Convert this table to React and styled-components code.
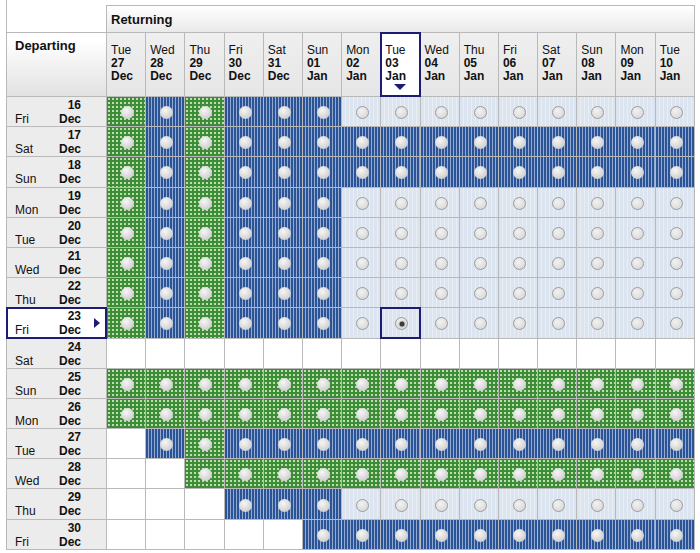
import React from "react";
import styled, { createGlobalStyle, css } from "styled-components";

const LINE = "#b9b9b9";
const NAVY = "#1c1c74";

const GlobalStyle = createGlobalStyle`
  body {
    margin: 0;
    background: #fff;
    font-family: "Liberation Sans", Arial, sans-serif;
    color: #111;
  }
`;

// left border runs to the top of the page, the grid sits 5px lower
const Frame = styled.div`
  margin-left: 6px;
  padding-top: 5px;
  border-left: 1px solid ${LINE};
  width: fit-content;
  background: #fff;
`;

// grid lines are the gaps showing the grid background
const Grid = styled.div`
  display: grid;
  grid-template-columns: 99px repeat(15, 38.2px);
  grid-template-rows: 27px 63px repeat(15, 29.2px);
  gap: 1px;
  background: ${LINE};
  border-right: 1px solid ${LINE};
  border-bottom: 1px solid ${LINE};
`;

const Corner = styled.div`
  background: #fff;
`;

const Returning = styled.div`
  grid-column: span 15;
  border-top: 1px solid ${LINE};
  background: linear-gradient(#ffffff, #e9e9e9);
  display: flex;
  align-items: center;
  padding-left: 4px;
  font-size: 13px;
  font-weight: bold;
`;

const Departing = styled.div`
  background: linear-gradient(#ffffff 10%, #e2e2e2);
  padding: 5px 8px;
  font-size: 13px;
  line-height: 15px;
  font-weight: bold;
`;

const selectedBox = css`
  position: relative;
  background: #fff;
  &::after {
    content: "";
    position: absolute;
    inset: -1px;
    border: 2px solid ${NAVY};
    z-index: 2;
    pointer-events: none;
  }
`;

const DateHead = styled.div`
  background: linear-gradient(#efefef, #e6e6e6);
  display: flex;
  flex-direction: column;
  justify-content: center;
  padding: 0 0 3px 4px;
  font-size: 12px;
  ${(p) => p.$active && selectedBox}
`;

const DayName = styled.span`
  line-height: 13px;
`;

const DayNum = styled.span`
  line-height: 12px;
  font-weight: bold;
`;

const Month = styled.span`
  line-height: 14px;
  font-weight: bold;
`;

const DownArrow = styled.span`
  position: absolute;
  left: 50%;
  bottom: 6px;
  transform: translateX(-50%);
  border-left: 6px solid transparent;
  border-right: 6px solid transparent;
  border-top: 6px solid ${NAVY};
`;

const RowHead = styled.div`
  background: #ececec;
  padding: 1px 25px 0 8px;
  display: grid;
  grid-template-columns: 1fr auto;
  grid-template-rows: 14px 14px;
  font-size: 12px;
  line-height: 14px;
  ${(p) => p.$active && selectedBox}
`;

const RowNum = styled.span`
  grid-column: 2;
  text-align: right;
  font-weight: bold;
`;

const RowDay = styled.span`
  grid-column: 1;
`;

const RowMonth = styled.span`
  text-align: right;
  font-weight: bold;
`;

const RightArrow = styled.span`
  position: absolute;
  right: 6px;
  top: 50%;
  transform: translateY(-50%);
  border-top: 5.5px solid transparent;
  border-bottom: 5.5px solid transparent;
  border-left: 6px solid ${NAVY};
`;

const fills = {
  G: css`
    background-color: #3d8c37;
    background-image: radial-gradient(circle at 2px 2px, #bddfae 0 1px, transparent 1.3px);
    background-size: 4px 4px;
  `,
  B: css`
    background: repeating-linear-gradient(90deg, #2a5496 0 2px, #93a9cf 2px 3px);
  `,
  L: css`
    background: repeating-linear-gradient(90deg, #dce4ef 0 3px, #e9eef5 3px 4px);
  `,
  W: css`
    background: #fff;
  `,
};

const Slot = styled.div`
  display: flex;
  align-items: center;
  justify-content: center;
  padding: 2px 0 0 3px;
  position: relative;
  ${(p) => fills[p.$kind] || fills.W}
  ${(p) =>
    p.$active &&
    css`
      &::after {
        content: "";
        position: absolute;
        inset: -1px;
        border: 2px solid ${NAVY};
        z-index: 2;
        pointer-events: none;
      }
    `}
`;

const Dot = styled.span`
  width: 13px;
  height: 13px;
  border-radius: 50%;
  box-sizing: border-box;
  position: relative;
  background: radial-gradient(circle at 40% 35%, #f6f6f6, #d6d6d6 60%, #bdbdbd);
  ${(p) =>
    p.$light &&
    css`
      border: 1px solid #9c9c9c;
      background: radial-gradient(circle at 40% 35%, #f2f2f2, #dcdcdc 70%, #cfcfcf);
    `}
  ${(p) =>
    p.$checked &&
    css`
      &::after {
        content: "";
        position: absolute;
        left: 50%;
        top: 50%;
        width: 5px;
        height: 5px;
        border-radius: 50%;
        transform: translate(-50%, -50%);
        background: #3b3b3b;
        box-shadow: 0 0 0 1px #c9c9c9;
      }
    `}
`;

const returning = [
  ["Tue", "27", "Dec"],
  ["Wed", "28", "Dec"],
  ["Thu", "29", "Dec"],
  ["Fri", "30", "Dec"],
  ["Sat", "31", "Dec"],
  ["Sun", "01", "Jan"],
  ["Mon", "02", "Jan"],
  ["Tue", "03", "Jan"],
  ["Wed", "04", "Jan"],
  ["Thu", "05", "Jan"],
  ["Fri", "06", "Jan"],
  ["Sat", "07", "Jan"],
  ["Sun", "08", "Jan"],
  ["Mon", "09", "Jan"],
  ["Tue", "10", "Jan"],
];

// G = green, B = blue, L = light, W = no date, E = empty (no flights)
const departing = [
  ["Fri", "16", "GBGBBBLLLLLLLLL"],
  ["Sat", "17", "GBGBBBBBBBBBBBB"],
  ["Sun", "18", "GBGBBBBBBBBBBBB"],
  ["Mon", "19", "GBGBBBLLLLLLLLL"],
  ["Tue", "20", "GBGBBBLLLLLLLLL"],
  ["Wed", "21", "GBGBBBLLLLLLLLL"],
  ["Thu", "22", "GBGBBBLLLLLLLLL"],
  ["Fri", "23", "GBGBBBLLLLLLLLL"],
  ["Sat", "24", "EEEEEEEEEEEEEEE"],
  ["Sun", "25", "GGGGGGGGGGGGGGG"],
  ["Mon", "26", "GGGGGGGGGGGGGGG"],
  ["Tue", "27", "WBGBBBBBBBBBBBB"],
  ["Wed", "28", "WWGGGGGGGGGGGGG"],
  ["Thu", "29", "WWWBBBLLLLLLLLL"],
  ["Fri", "30", "WWWWWBBBBBBBBBB"],
];

const SEL_ROW = 7;
const SEL_COL = 7;

export default function App() {
  return (
    <>
      <GlobalStyle />
      <Frame>
        <Grid>
          <Corner />
          <Returning>Returning</Returning>
          <Departing>Departing</Departing>
          {returning.map(([day, num, month], i) => (
            <DateHead key={i} $active={i === SEL_COL}>
              <DayName>{day}</DayName>
              <DayNum>{num}</DayNum>
              <Month>{month}</Month>
              {i === SEL_COL && <DownArrow />}
            </DateHead>
          ))}
          {departing.map(([day, num, cells], r) => (
            <React.Fragment key={r}>
              <RowHead $active={r === SEL_ROW}>
                <RowNum>{num}</RowNum>
                <RowDay>{day}</RowDay>
                <RowMonth>Dec</RowMonth>
                {r === SEL_ROW && <RightArrow />}
              </RowHead>
              {cells.split("").map((k, c) => {
                const active = r === SEL_ROW && c === SEL_COL;
                return (
                  <Slot key={c} $kind={k} $active={active}>
                    {k !== "W" && k !== "E" && (
                      <Dot $light={k === "L"} $checked={active} />
                    )}
                  </Slot>
                );
              })}
            </React.Fragment>
          ))}
        </Grid>
      </Frame>
    </>
  );
}
